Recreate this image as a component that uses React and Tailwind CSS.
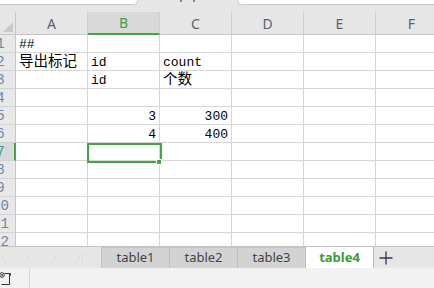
import { ChevronLeft, ChevronRight, ChevronLast } from "lucide-react";

const cols = ["A", "B", "C", "D", "E", "F"];

const data = {
  1: { A: "##" },
  2: { A: "导出标记", B: "id", C: "count" },
  3: { B: "id", C: "个数" },
  5: { B: "3", C: "300", num: true },
  6: { B: "4", C: "400", num: true },
};

const isCjk = (s) => /[\u4e00-\u9fff]/.test(s);

const Cell = ({ text, num, selected }) => {
  return (
    <div className="relative h-[18px] w-[72px] shrink-0 border-r border-b border-[#d6d6d6] bg-white">
      {text && (
        <div
          className={`flex h-full items-end ${num ? "justify-end pr-[3px]" : "pl-[3px]"}`}
        >
          <span
            className={
              isCjk(text)
                ? "text-[14.5px] leading-[15px] text-black"
                : "text-[13px] leading-[14px] text-black"
            }
          >
            {text}
          </span>
        </div>
      )}
      {selected && (
        <div className="absolute -left-[1px] top-0 z-10 h-[20px] w-[75px] border-2 border-[#45a545]">
          <div className="absolute left-[67px] top-[14px] h-[6px] w-[6px] border border-white bg-[#45a545]" />
        </div>
      )}
    </div>
  );
};

const RowHead = ({ n, active }) => (
  <div
    className={`h-[18px] w-[16px] shrink-0 overflow-hidden border-b border-[#d2d2d2] ${
      active ? "border-r-2 border-r-[#45a545] bg-[#d9d9d9]" : "border-r border-r-[#c6c6c6] bg-[#e8e8e8]"
    }`}
  >
    <div
      className={`-ml-[16px] w-[33px] text-center text-[14px] leading-[18px] ${
        active ? "text-[#2f9f8f]" : "text-[#6d86a6]"
      }`}
    >
      {n}
    </div>
  </div>
);

const Tab = ({ name, active }) => (
  <div
    className={`flex h-full w-[68px] shrink-0 items-center justify-center border-r border-[#bdbdbd] text-[13px] ${
      active
        ? "bg-white font-bold text-[#3c9c3c]"
        : "border-t border-t-[#c4c4c4] bg-[#d3d3d3] text-[#454545]"
    }`}
  >
    {name}
  </div>
);

const App = () => {
  const rows = Array.from({ length: 12 }, (_, i) => i + 1);

  return (
    <div
      className="flex h-[288px] w-[434px] flex-col overflow-hidden bg-[#e6e6e6]"
      style={{ fontFamily: '"Liberation Mono", "Noto Sans CJK SC", monospace' }}
    >
      {/* formula area */}
      <div className="flex h-[12px] shrink-0 items-start">
        <div className="-mt-[2px] h-[7px] w-[138px] rounded-br-[5px] border-r border-b border-[#c9c9c9] bg-white" />
        <div className="flex w-[99px] justify-center gap-[11px] pt-0">
          <div className="h-[2px] w-[2px] bg-[#7a8aa0]" />
          <div className="h-[2px] w-[2px] bg-[#7a8aa0]" />
        </div>
        <div className="-mt-[2px] h-[7px] flex-1 rounded-bl-[5px] border-l border-b border-[#c9c9c9] bg-white" />
      </div>

      {/* column headers */}
      <div
        className="flex h-[23px] shrink-0"
        style={{ fontFamily: '"Noto Sans", "Liberation Sans", sans-serif' }}
      >
        <div className="flex h-full w-[16px] shrink-0 items-end justify-end border-r border-b border-[#c6c6c6] p-[2px]">
          <div
            className="h-[10px] w-[10px] bg-[#c8c8c8]"
            style={{ clipPath: "polygon(100% 0, 100% 100%, 0 100%)" }}
          />
        </div>
        {cols.map((c) => (
          <div
            key={c}
            className={`flex h-full w-[72px] shrink-0 items-center justify-center border-r border-[#cfcfcf] text-[14px] ${
              c === "B"
                ? "border-b-2 border-b-[#45a545] bg-[#d9d9d9] text-[#3a9e4a]"
                : "border-b border-b-[#c6c6c6] text-[#5a6270]"
            }`}
          >
            {c}
          </div>
        ))}
      </div>

      {/* grid */}
      <div className="flex-1 overflow-hidden">
        {rows.map((r) => (
          <div key={r} className="flex">
            <RowHead n={r} active={r === 7} />
            {cols.map((c) => (
              <Cell
                key={c}
                text={data[r]?.[c]}
                num={data[r]?.num}
                selected={r === 7 && c === "B"}
              />
            ))}
          </div>
        ))}
      </div>

      {/* sheet tabs */}
      <div
        className="flex h-[22px] shrink-0 border-t border-[#c4c4c4]"
        style={{ fontFamily: '"Noto Sans", "Liberation Sans", sans-serif' }}
      >
        <div className="flex w-[102px] shrink-0 items-center gap-[9px] border-r border-[#c4c4c4] text-[#d2d2d2]">
          <ChevronLeft size={16} strokeWidth={1} className="-ml-[4px]" />
          <ChevronLeft size={16} strokeWidth={1} />
          <ChevronRight size={16} strokeWidth={1} />
          <ChevronLast size={16} strokeWidth={1} />
        </div>
        <Tab name="table1" />
        <Tab name="table2" />
        <Tab name="table3" />
        <Tab name="table4" active />
        <div className="flex flex-1 items-center pl-[5px]">
          <svg width="14" height="14" viewBox="0 0 14 14">
            <path d="M7 0.5V13.5M0.5 7H13.5" stroke="#2b3950" strokeWidth="1.3" />
          </svg>
        </div>
      </div>

      {/* status bar */}
      <div className="flex h-[20px] shrink-0 items-center bg-[#f2f2f2]">
        <div className="w-[29px] shrink-0 pl-0">
          <svg width="13" height="14" viewBox="0 0 13 14" className="-ml-[1px]">
            <circle cx="3" cy="4" r="2.3" fill="none" stroke="#333" strokeWidth="1" />
            <circle cx="3" cy="4" r="0.9" fill="#333" />
            <path d="M5.5 2.5H11.5V4.5M10.5 2.5V13.5H2.5" fill="none" stroke="#333" strokeWidth="1" />
          </svg>
        </div>
        <div className="h-full w-px bg-[#d6d6d6]" />
      </div>
    </div>
  );
};

export default App;
